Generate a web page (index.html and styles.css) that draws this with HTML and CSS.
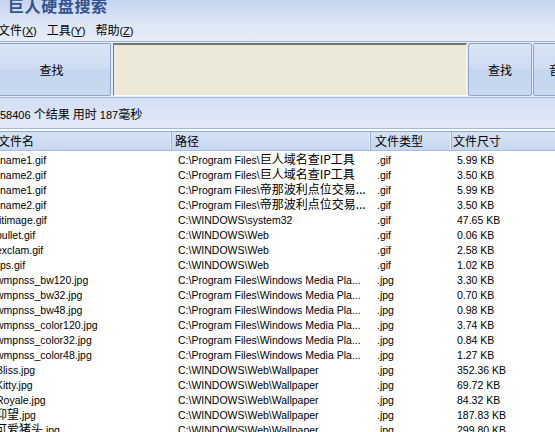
FILE: index.html
```html
<!DOCTYPE html>
<html lang="zh">
<head>
<meta charset="utf-8">
<title>巨人硬盘搜索</title>
<link rel="stylesheet" href="styles.css">
</head>
<body>
<div class="app">
  <div class="titlebar"><span class="title">巨人硬盘搜索</span></div>
  <div class="menubar">
    <span class="menu">文件<span class="acc">(<u>X</u>)</span></span>
    <span class="menu">工具<span class="acc">(<u>Y</u>)</span></span>
    <span class="menu">帮助<span class="acc">(<u>Z</u>)</span></span>
  </div>
  <div class="toolbar">
    <button class="btn btn-main">查找</button>
    <div class="searchbox"></div>
    <button class="btn btn-side">查找</button>
    <button class="btn btn-last">音乐</button>
  </div>
  <div class="status"><span class="num">58406</span>&nbsp;<span class="cj">个结果</span>&nbsp;<span class="cj">用时</span>&nbsp;<span class="num">187</span><span class="cj">毫秒</span></div>
  <div class="list">
    <div class="row head">
      <div class="hc hc-name">文件名</div>
      <div class="hc hc-path">路径</div>
      <div class="hc hc-type">文件类型</div>
      <div class="hc hc-size">文件尺寸</div>
    </div>
    <div class="rows">
      <div class="row"><div class="c name">name1.gif</div><div class="c path">C:\Program Files\<span class="cj">巨人域名查IP工具</span></div><div class="c type">.gif</div><div class="c size">5.99 KB</div></div>
      <div class="row"><div class="c name">name2.gif</div><div class="c path">C:\Program Files\<span class="cj">巨人域名查IP工具</span></div><div class="c type">.gif</div><div class="c size">3.50 KB</div></div>
      <div class="row"><div class="c name">name1.gif</div><div class="c path">C:\Program Files\<span class="cj">帝那波利点位交易...</span></div><div class="c type">.gif</div><div class="c size">5.99 KB</div></div>
      <div class="row"><div class="c name">name2.gif</div><div class="c path">C:\Program Files\<span class="cj">帝那波利点位交易...</span></div><div class="c type">.gif</div><div class="c size">3.50 KB</div></div>
      <div class="row"><div class="c name"><span class="cut">titimage.gif</span></div><div class="c path">C:\WINDOWS\system32</div><div class="c type">.gif</div><div class="c size">47.65 KB</div></div>
      <div class="row"><div class="c name"><span class="cut">bullet.gif</span></div><div class="c path">C:\WINDOWS\Web</div><div class="c type">.gif</div><div class="c size">0.06 KB</div></div>
      <div class="row"><div class="c name"><span class="cut">exclam.gif</span></div><div class="c path">C:\WINDOWS\Web</div><div class="c type">.gif</div><div class="c size">2.58 KB</div></div>
      <div class="row"><div class="c name">ps.gif</div><div class="c path">C:\WINDOWS\Web</div><div class="c type">.gif</div><div class="c size">1.02 KB</div></div>
      <div class="row"><div class="c name"><span class="cut">wmpnss_bw120.jpg</span></div><div class="c path">C:\Program Files\Windows Media Pla...</div><div class="c type">.jpg</div><div class="c size">3.30 KB</div></div>
      <div class="row"><div class="c name"><span class="cut">wmpnss_bw32.jpg</span></div><div class="c path">C:\Program Files\Windows Media Pla...</div><div class="c type">.jpg</div><div class="c size">0.70 KB</div></div>
      <div class="row"><div class="c name"><span class="cut">wmpnss_bw48.jpg</span></div><div class="c path">C:\Program Files\Windows Media Pla...</div><div class="c type">.jpg</div><div class="c size">0.98 KB</div></div>
      <div class="row"><div class="c name"><span class="cut">wmpnss_color120.jpg</span></div><div class="c path">C:\Program Files\Windows Media Pla...</div><div class="c type">.jpg</div><div class="c size">3.74 KB</div></div>
      <div class="row"><div class="c name"><span class="cut">wmpnss_color32.jpg</span></div><div class="c path">C:\Program Files\Windows Media Pla...</div><div class="c type">.jpg</div><div class="c size">0.84 KB</div></div>
      <div class="row"><div class="c name"><span class="cut">wmpnss_color48.jpg</span></div><div class="c path">C:\Program Files\Windows Media Pla...</div><div class="c type">.jpg</div><div class="c size">1.27 KB</div></div>
      <div class="row"><div class="c name"><span class="cut">Bliss.jpg</span></div><div class="c path">C:\WINDOWS\Web\Wallpaper</div><div class="c type">.jpg</div><div class="c size">352.36 KB</div></div>
      <div class="row"><div class="c name"><span class="cut">Kitty.jpg</span></div><div class="c path">C:\WINDOWS\Web\Wallpaper</div><div class="c type">.jpg</div><div class="c size">69.72 KB</div></div>
      <div class="row"><div class="c name"><span class="cut">Royale.jpg</span></div><div class="c path">C:\WINDOWS\Web\Wallpaper</div><div class="c type">.jpg</div><div class="c size">84.32 KB</div></div>
      <div class="row"><div class="c name"><span class="cut-cj"><span class="cj">仰望</span>.jpg</span></div><div class="c path">C:\WINDOWS\Web\Wallpaper</div><div class="c type">.jpg</div><div class="c size">187.83 KB</div></div>
      <div class="row"><div class="c name"><span class="cut-cj"><span class="cj">可爱猪头</span>.jpg</span></div><div class="c path">C:\WINDOWS\Web\Wallpaper</div><div class="c type">.jpg</div><div class="c size">299.80 KB</div></div>
    </div>
  </div>
</div>
</body>
</html>
```

FILE: styles.css
```css
html, body {
  margin: 0;
  padding: 0;
}
body {
  width: 555px;
  height: 432px;
  overflow: hidden;
  background: #ffffff;
  font-family: "Liberation Sans", "Noto Sans CJK SC", sans-serif;
  color: #000;
}
.app {
  width: 555px;
  height: 432px;
  overflow: hidden;
  display: flex;
  flex-direction: column;
}
.cj {
  font-family: "Noto Sans CJK SC", sans-serif;
  font-size: 12px;
  line-height: 1;
}

/* title */
.titlebar {
  height: 20px;
  flex: none;
  overflow: hidden;
  padding-left: 8px;
  background: linear-gradient(#c3d5f0, #d9e4f5);
}
.title {
  display: block;
  margin-top: -4px;
  font-family: "Noto Sans CJK SC", sans-serif;
  font-weight: bold;
  font-size: 16px;
  line-height: 18px;
  letter-spacing: 0.6px;
  color: #33528d;
}

/* menu */
.menubar {
  height: 21px;
  flex: none;
  display: flex;
  align-items: center;
  gap: 10px;
  margin-left: -2px;
  background: linear-gradient(#dbe5f5, #e6edf8);
  font-family: "Noto Sans CJK SC", sans-serif;
  font-size: 12px;
}
.menu {
  line-height: 14px;
}
.acc {
  font-family: "Liberation Sans", sans-serif;
  font-size: 11px;
}

/* toolbar */
.toolbar {
  flex: none;
  display: flex;
  gap: 1px;
  border-top: 1px solid #9cb3d5;
  padding: 1px 0 1px;
  background: #e3ebf8;
}
.btn {
  flex: none;
  height: 53px;
  margin: 0;
  padding: 0;
  border: 1px solid #8ca6cb;
  border-radius: 2px;
  background: linear-gradient(#d9e5f6 0%, #cedcf2 48%, #c3d5ef 52%, #cbd9f0 100%);
  font-family: "Noto Sans CJK SC", sans-serif;
  font-size: 12px;
  color: #000;
}
.btn-main {
  width: 119px;
  margin-left: -8px;
  margin-right: 1px;
}
.btn-side {
  width: 64px;
}
.btn-last {
  width: 56px;
}
.searchbox {
  flex: none;
  width: 352px;
  height: 50px;
  background: #ece9d8;
  border-top: 2px solid #77766a;
  border-left: 1px solid #7f7e72;
  border-right: 1px solid #f7f6f0;
  border-bottom: 1px solid #ffffff;
}

/* status */
.status {
  flex: none;
  height: 30px;
  line-height: 34px;
  overflow: hidden;
  white-space: nowrap;
  border-top: 1px solid #a3badc;
  border-bottom: 1px solid #a3badc;
  background: linear-gradient(#d2dff3, #e2eaf7);
  font-size: 11px;
}
.num {
  font-family: "Liberation Sans", sans-serif;
  font-size: 11px;
}

/* list */
.list {
  flex: 1;
  margin-top: 2px;
  background: #ffffff;
  overflow: hidden;
}
.row {
  display: grid;
  grid-template-columns: 172px 199px 81px 1fr;
  height: 15px;
  line-height: 15px;
  font-size: 10.5px;
  white-space: nowrap;
}
.row.head {
  height: 18px;
  line-height: 18px;
  border-top: 1px solid #8fa8ce;
  border-bottom: 1px solid #aabfdd;
  background: linear-gradient(#d6e3f5, #c5d6ef);
  font-family: "Noto Sans CJK SC", sans-serif;
  font-size: 12px;
}
.hc {
  overflow: hidden;
  border-right: 1px solid #9ab1d5;
  box-shadow: inset -1px 0 0 #e8eff9;
}
.hc-name { text-indent: -2px; }
.hc-path { padding-left: 3px; }
.hc-type { padding-left: 4px; }
.hc-size { padding-left: 1px; border-right: none; box-shadow: none; }
.rows {
  padding-top: 2px;
}
.c {
  overflow: hidden;
}
.path { padding-left: 6px; }
.type { padding-left: 6px; }
.size { padding-left: 5px; }
.cut {
  display: inline-block;
  margin-left: -4px;
}
.cut-cj {
  display: inline-block;
  margin-left: -5px;
}
```
